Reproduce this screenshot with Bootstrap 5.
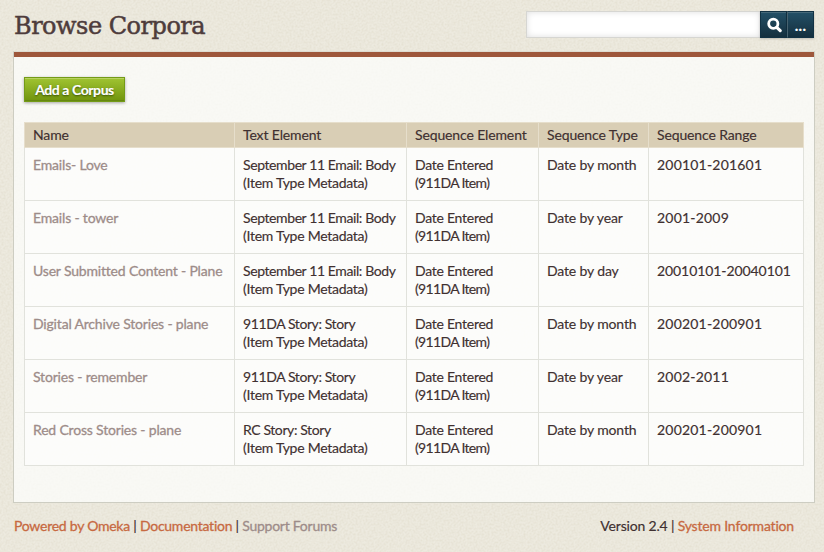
<!DOCTYPE html>
<html lang="en">
<head>
<meta charset="utf-8">
<meta name="viewport" content="width=device-width, initial-scale=1">
<title>Browse Corpora</title>
<link href="https://cdn.jsdelivr.net/npm/bootstrap@5.3.0/dist/css/bootstrap.min.css" rel="stylesheet">
<style>
  body {
    background: #edeadf url("data:image/svg+xml,%3Csvg xmlns='http://www.w3.org/2000/svg' width='200' height='200'%3E%3Cfilter id='n'%3E%3CfeTurbulence type='fractalNoise' baseFrequency='.5' numOctaves='2' stitchTiles='stitch'/%3E%3CfeColorMatrix values='0 0 0 0 .5 0 0 0 0 .44 0 0 0 0 .28 .32 0 0 0 -.11'/%3E%3C/filter%3E%3Crect width='200' height='200' filter='url(%23n)'/%3E%3C/svg%3E");
    color: #403030; font: 14px/18px Lato, "Open Sans", sans-serif; height: 552px; overflow: hidden;
    -webkit-text-stroke: .15px;
  }
  a { text-decoration: none; color: #c76941; -webkit-text-stroke: .3px; }
  .muted-link, .corpora td a { color: #9d8c89; }
  .page-head { height: 51px; padding: 11px 10px 0 14px; }
  .page-title { font: 24px/30px "DejaVu Serif", serif; letter-spacing: -.5px; margin: 0; color: #4e3c3c; -webkit-text-stroke: .5px; }
  .search-field { width: 234px; height: 27px; border: 1px solid #d6d6d2; border-right: 0; border-radius: 0; padding: 0 6px; box-shadow: inset 0 0 6px #ddd; }
  .search-btn { width: 27px; height: 27px; padding: 0; border: 1px solid #123244; border-radius: 0; color: #fff; background: linear-gradient(#235067, #142f3e); box-shadow: inset 0 1px #46697a, 0 1px 2px #0003; }
  .search-btn + .search-btn { border-left-color: #47626f; }
  .dots { display: block; font: bold 15px/22px Lato, sans-serif; letter-spacing: .3px; }
  .panel { margin-left: 13px; width: 802px; height: 452px; border: 1px solid #cdcdc2; background: #fdfffdb8; background-clip: padding-box; border-top-color: #dedbd0; }
  .panel-rule { height: 5px; background: #9e573b; }
  .panel-body { padding: 20px 10px 0; }
  .add-btn { width: 101px; height: 25px; padding: 0; border: 1px solid #749b17; border-radius: 0; color: #fff; background: linear-gradient(#a0c432, #71940d); box-shadow: inset 0 1px #b9d260, inset 0 -1px #668811, 0 1px 3px #0005; font-size: 14px; line-height: 24px; font-weight: 700; letter-spacing: -.42px; text-shadow: 0 1px 2px #344a00; }
  .corpora { table-layout: fixed; width: 780px; margin: 20px 0 0; border-collapse: collapse; color: #403030; font-size: 14px; line-height: 18px; letter-spacing: -.18px; --bs-table-bg: transparent; }
  .corpora td { padding: 8px; border: 1px solid #e1e2dc; background: #ffffff90; height: 53px; white-space: nowrap; vertical-align: top; }
  .corpora th { padding: 3px 8px; border: 1px solid #e6decb; background: #d9ceb5; height: 25px; font-weight: 400; white-space: nowrap; letter-spacing: -.13px; }
  .corpora td:nth-child(2) { letter-spacing: -.4px; }
  .corpora td:nth-child(2) span { letter-spacing: -.27px; }
  .corpora td:nth-child(3) { letter-spacing: -.26px; }
  .corpora td:nth-child(3) span { letter-spacing: -.66px; }
  .corpora td:nth-child(4) { letter-spacing: -.15px; }
  .corpora td:nth-child(5) { letter-spacing: .2px; }
  .corpora tr:nth-child(3) td:nth-child(5) { letter-spacing: -.08px; }
  .page-foot { padding: 14px 30px 0 14px; letter-spacing: -.25px; }
  .page-foot div:last-child { letter-spacing: -.18px; }
</style>
</head>
<body>
<header class="page-head d-flex justify-content-between">
  <h1 class="page-title">Browse Corpora</h1>
  <form class="d-flex">
    <input class="search-field form-control" type="text" aria-label="Search">
    <button class="search-btn btn d-flex align-items-center justify-content-center" type="button" aria-label="Submit search">
      <svg width="16" height="16" viewBox="0 0 16 16" fill="none" stroke="#fff"><circle cx="7.3" cy="6.7" r="4.6" stroke-width="2.8"/><path d="M10.7 10.3l3.5 3.4" stroke-width="3.1" stroke-linecap="round"/></svg>
    </button>
    <button class="search-btn btn" type="button"><span class="dots">...</span></button>
  </form>
</header>
<main class="panel">
  <div class="panel-rule"></div>
  <div class="panel-body">
    <button class="add-btn btn d-block" type="button">Add a Corpus</button>
    <table class="corpora table">
      <colgroup><col width="210"><col width="172"><col width="132"><col width="110"><col width="155"></colgroup>
      <thead><tr><th>Name</th><th>Text Element</th><th>Sequence Element</th><th>Sequence Type</th><th>Sequence Range</th></tr></thead>
      <tbody>
        <tr><td><a href="#">Emails- Love</a></td><td>September 11 Email: Body<br><span>(Item Type Metadata)</span></td><td>Date Entered<br><span>(911DA Item)</span></td><td>Date by month</td><td>200101-201601</td></tr>
        <tr><td><a href="#">Emails - tower</a></td><td>September 11 Email: Body<br><span>(Item Type Metadata)</span></td><td>Date Entered<br><span>(911DA Item)</span></td><td>Date by year</td><td>2001-2009</td></tr>
        <tr><td><a href="#">User Submitted Content - Plane</a></td><td>September 11 Email: Body<br><span>(Item Type Metadata)</span></td><td>Date Entered<br><span>(911DA Item)</span></td><td>Date by day</td><td>20010101-20040101</td></tr>
        <tr><td><a href="#">Digital Archive Stories - plane</a></td><td>911DA Story: Story<br><span>(Item Type Metadata)</span></td><td>Date Entered<br><span>(911DA Item)</span></td><td>Date by month</td><td>200201-200901</td></tr>
        <tr><td><a href="#">Stories - remember</a></td><td>911DA Story: Story<br><span>(Item Type Metadata)</span></td><td>Date Entered<br><span>(911DA Item)</span></td><td>Date by year</td><td>2002-2011</td></tr>
        <tr><td><a href="#">Red Cross Stories - plane</a></td><td>RC Story: Story<br><span>(Item Type Metadata)</span></td><td>Date Entered<br><span>(911DA Item)</span></td><td>Date by month</td><td>200201-200901</td></tr>
      </tbody>
    </table>
  </div>
</main>
<footer class="page-foot d-flex justify-content-between">
  <div><a href="#">Powered by Omeka</a> | <a href="#">Documentation</a> | <a href="#" class="muted-link">Support Forums</a></div>
  <div>Version 2.4 | <a href="#">System Information</a></div>
</footer>
<script src="https://cdn.jsdelivr.net/npm/bootstrap@5.3.0/dist/js/bootstrap.bundle.min.js"></script>
</body>
</html>
